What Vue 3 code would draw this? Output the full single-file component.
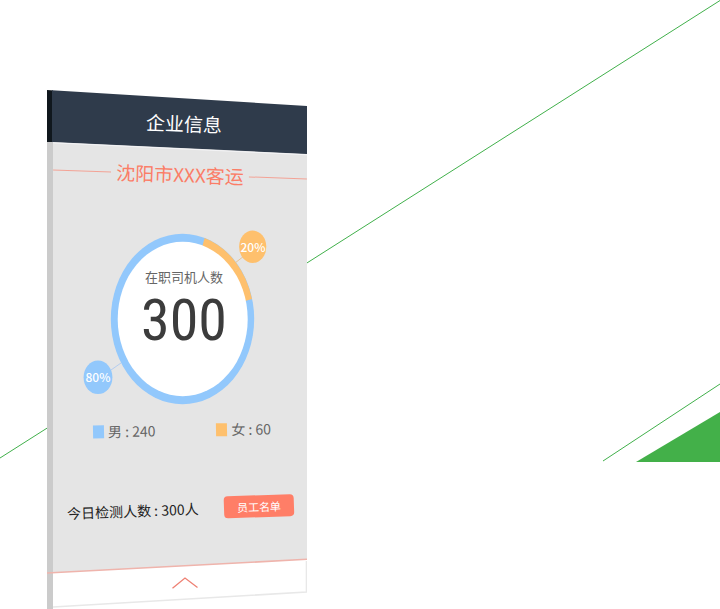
<script setup>
const title = '企业信息'
const company = '沈阳市XXX客运'
const legend = [
  { key: 'male', label: '男', count: 240 },
  { key: 'female', label: '女', count: 60 },
]
</script>

<template>
  <main class="page">
    <svg class="backdrop" viewBox="0 0 720 609" preserveAspectRatio="none" aria-hidden="true">
      <path d="M0 458 L720 0.5 M603 461 L720 384" fill="none" stroke="#41b04b" stroke-width="1" />
      <path d="M636 462 L720 412 V462 Z" fill="#43b049" />
    </svg>

    <section class="phone">
      <svg class="frame" viewBox="0 0 260 519" preserveAspectRatio="none" aria-hidden="true">
        <path d="M0 0 L6 0.4 V519 H0 Z" fill="#cbcbcb" />
        <path d="M0 0 L6 0.4 V52 H0 Z" fill="#10171d" />
        <path d="M6 51 L260 63 V470 L6 483 Z" fill="#e5e5e5" />
        <path d="M5 0.3 L260 16 V64 L5 52 Z" fill="#2f3b4b" />
        <path d="M6 52.8 L260 64.8" stroke="#f4f4f6" stroke-width="1" />
        <path d="M6 483 L260 469.5 V502 L6 517 Z" fill="#fff" />
        <path d="M0 483 L260 469.3" stroke="#efb4ac" stroke-width="1.6" />
        <path d="M6 517 L259.5 502 V471" fill="none" stroke="#e8e8e8" stroke-width="1.6" />
      </svg>

      <div class="content">
        <header class="bar"><h1>{{ title }}</h1></header>

        <div class="company">
          <i class="rule"></i>
          <h2>{{ company }}</h2>
          <i class="rule"></i>
        </div>

        <div class="chart">
          <svg class="ring" viewBox="0 0 188 180" aria-hidden="true">
            <path d="M28 140 L38 133" stroke="#b4cdf0" stroke-width="1" />
            <path d="M152 33 L161 26" stroke="#e6c397" stroke-width="1" />
            <ellipse cx="99.5" cy="89" rx="71.7" ry="85.2" fill="#92c8fc" />
            <path d="M99.5 89 L121.6 8 A71.7 85.2 0 0 1 169 69 Z" fill="#fec06d" />
            <ellipse cx="99.7" cy="89" rx="65" ry="77.2" fill="#fff" />
            <ellipse cx="169.7" cy="16.8" rx="13.6" ry="16.2" fill="#fec06d" />
            <ellipse cx="15" cy="147.3" rx="14.4" ry="16.8" fill="#92c8fc" />
          </svg>
          <div class="total">
            <span class="caption">在职司机人数</span>
            <strong>300</strong>
          </div>
          <span class="badge badge-female">20%</span>
          <span class="badge badge-male">80%</span>
        </div>

        <ul class="legend">
          <li v-for="item in legend" :key="item.key">
            <i class="swatch" :class="item.key"></i>{{ item.label }} : {{ item.count }}
          </li>
        </ul>

        <div class="today">
          <p>今日检测人数 : 300人</p>
          <button type="button" class="roster">员工名单</button>
        </div>

        <button type="button" class="expand" aria-label="展开">
          <svg viewBox="0 0 26 12" aria-hidden="true">
            <path d="M0.5 11.3 L13 1 L25.5 10.5" fill="none" stroke="#ee8073" stroke-width="1.3" />
          </svg>
        </button>
      </div>
    </section>
  </main>
</template>

<style>
body {
  margin: 0;
  background: #fff;
}
</style>

<style scoped>
.page {
  position: relative;
  box-sizing: border-box;
  min-height: 100vh;
  padding: 90px 0 0 47px;
  overflow: hidden;
  font-family: "Noto Sans CJK SC", "Noto Sans", sans-serif;
}
.backdrop,
.frame {
  position: absolute;
  inset: 0;
  width: 100%;
  height: 100%;
}
.phone {
  position: relative;
  width: 260px;
  max-width: 100%;
  overflow: hidden;
}
.content {
  position: relative;
  display: flex;
  flex-direction: column;
  padding-left: 6px;
  padding-bottom: 12px;
}
h1,
h2,
p,
ul {
  margin: 0;
  padding: 0;
  font-weight: 400;
}
.bar {
  display: flex;
  align-items: center;
  justify-content: center;
  height: 66px;
  padding-left: 8px;
  transform: rotate(2deg);
}
h1 {
  color: #fff;
  font-size: 19px;
  line-height: 24px;
}
.company {
  display: flex;
  align-items: center;
  gap: 5px;
  height: 36px;
  transform: rotate(2deg);
}
h2 {
  color: #fb7d67;
  font-size: 19px;
  line-height: 36px;
}
.rule {
  flex: 1;
  height: 1px;
  background: #f3a396;
}
.chart {
  position: relative;
  width: 188px;
  margin: 38px 0 0 30px;
}
.ring {
  display: block;
  width: 100%;
}
.total {
  position: absolute;
  inset: 37px 0 0 14px;
  display: flex;
  flex-direction: column;
  align-items: center;
}
.caption {
  color: #666;
  font-size: 13px;
  line-height: 20px;
}
.total strong {
  color: #3c3c3c;
  font-family: "Roboto Condensed", "Open Sans", sans-serif;
  font-size: 58px;
  font-weight: 400;
  line-height: 66px;
}
.badge {
  position: absolute;
  width: 30px;
  color: #fff;
  font-size: 12px;
  font-weight: 500;
  line-height: 16px;
  text-align: center;
}
.badge-female {
  top: 9px;
  left: 155px;
}
.badge-male {
  top: 139px;
  left: 0;
}
.legend {
  display: flex;
  justify-content: space-between;
  height: 24px;
  margin-top: 8px;
  padding: 0 36px 0 40px;
  color: #666;
  font-size: 14px;
  line-height: 24px;
  list-style: none;
  transform: rotate(-1deg);
}
.legend li {
  display: flex;
  align-items: center;
}
.swatch {
  width: 11px;
  height: 13px;
  margin-right: 4px;
}
.male {
  background: #92c8fc;
}
.female {
  background: #fec06d;
}
.today {
  display: flex;
  align-items: center;
  justify-content: space-between;
  height: 24px;
  margin-top: 55px;
  padding: 0 13px 0 14px;
  color: #222;
  font-size: 14px;
  line-height: 24px;
  white-space: nowrap;
  transform: rotate(-2deg);
}
button {
  border: 0;
  font-family: inherit;
  cursor: pointer;
}
.roster {
  width: 70px;
  height: 22px;
  padding: 0;
  border-radius: 4px;
  background: #ff7e67;
  color: #fff;
  font-size: 11px;
  line-height: 22px;
}
.expand {
  align-self: center;
  margin: 48px 0 0 10px;
  padding: 8px;
  background: transparent;
}
.expand svg {
  display: block;
  width: 26px;
}
</style>
